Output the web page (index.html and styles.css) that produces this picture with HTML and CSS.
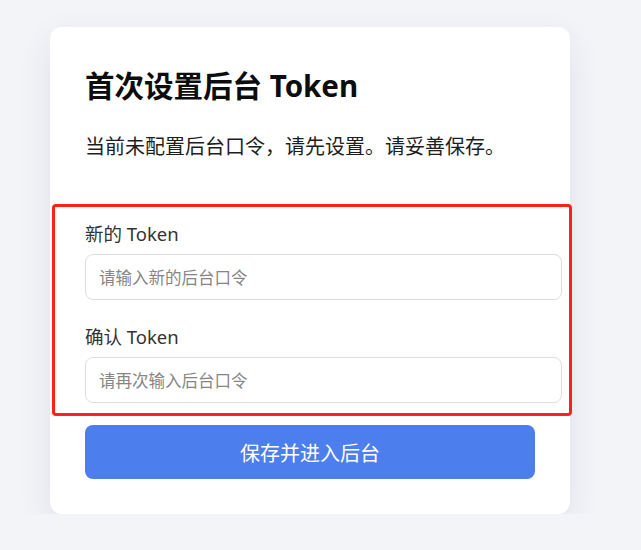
FILE: index.html
```html
<!DOCTYPE html>
<html lang="zh-CN">
<head>
<meta charset="utf-8">
<title>首次设置后台 Token</title>
<link rel="stylesheet" href="styles.css">
</head>
<body>
<main class="page">
  <section class="card">
    <h1 class="title">首次设置后台 Token</h1>
    <p class="desc">当前未配置后台口令，请先设置。请妥善保存。</p>
    <form class="form">
      <div class="field">
        <label class="label" for="t1">新的 Token</label>
        <input class="input" id="t1" type="password" placeholder="请输入新的后台口令">
      </div>
      <div class="field">
        <label class="label" for="t2">确认 Token</label>
        <input class="input" id="t2" type="password" placeholder="请再次输入后台口令">
      </div>
      <button class="btn" type="button">保存并进入后台</button>
    </form>
    <div class="highlight"></div>
  </section>
</main>
</body>
</html>
```

FILE: styles.css
```css
* { box-sizing: border-box; }
html {
  background: #f3f4f8;
}
body {
  margin: 0;
  padding: 0;
  font-family: "Noto Sans", "Noto Sans CJK SC", sans-serif;
}
.page {
  padding: 27px 0 0 50px;
}
.card {
  position: relative;
  width: 520px;
  background: #fff;
  border-radius: 12px;
  padding: 39px 35px 35px;
  box-shadow: 0 12px 34px rgba(30, 40, 80, 0.09);
}
.title {
  margin: 0;
  font-size: 29.5px;
  line-height: 40px;
  font-weight: 700;
  color: #0d0d0d;
}
.desc {
  margin: 27px 0 0;
  font-size: 20px;
  line-height: 28px;
  color: #1e1e1e;
}
.form {
  margin-top: 60px;
  display: flex;
  flex-direction: column;
}
.field {
  display: flex;
  flex-direction: column;
  margin-bottom: 24px;
}
.field:last-of-type {
  margin-bottom: 22px;
}
.label {
  font-size: 18.5px;
  line-height: 26px;
  color: #333;
  margin-bottom: 7px;
}
.input {
  box-sizing: content-box;
  width: 100%;
  height: 44px;
  padding: 0 12px 0 13px;
  border: 1px solid #dddee3;
  border-radius: 8px;
  font-family: inherit;
  font-size: 16.5px;
  color: #333;
  background: #fff;
  outline: none;
}
.input::placeholder {
  color: #868686;
}
.btn {
  height: 54px;
  width: 100%;
  border: none;
  border-radius: 8px;
  background: #4c7eee;
  color: #fff;
  font-family: inherit;
  font-size: 20px;
  cursor: pointer;
}
.highlight {
  position: absolute;
  left: 2px;
  top: 177px;
  width: 520px;
  height: 212px;
  border: 3px solid #ff2317;
  border-radius: 4px;
  pointer-events: none;
}
```
